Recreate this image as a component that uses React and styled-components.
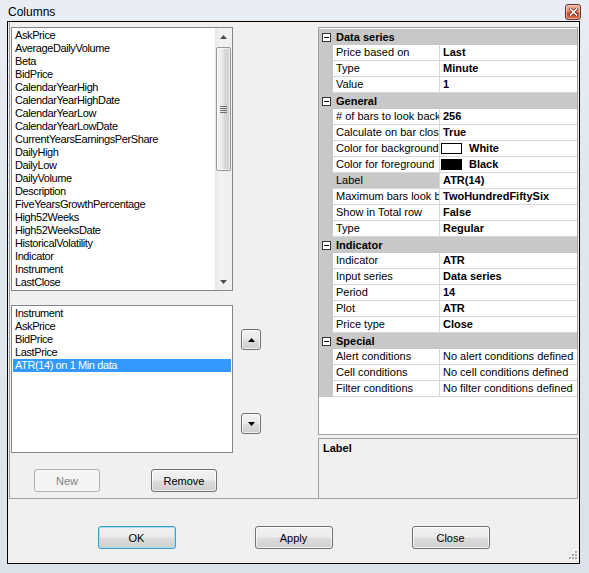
import React from 'react';
import styled, { createGlobalStyle, css } from 'styled-components';

const Global = createGlobalStyle`
  html, body { margin: 0; padding: 0; background: #dfe6ee; }
  body { font-family: "Liberation Sans", Arial, sans-serif; font-size: 11px; color: #000; }
  * { box-sizing: border-box; }
`;

const Window = styled.div`
  width: 589px;
  height: 573px;
  display: flex;
  flex-direction: column;
  padding: 0 9px 9px 7px;
  background: linear-gradient(180deg, #e9eef4 0%, #e1e7ee 30%, #dbe2ea 100%);
`;

const TitleBar = styled.div`
  height: 21px;
  flex: none;
  display: flex;
  align-items: flex-start;
  justify-content: space-between;
`;

const TitleText = styled.div`
  font-family: "Liberation Sans", Arial, sans-serif;
  font-size: 12px;
  line-height: 19px;
  padding: 3px 0 0 1px;
  color: #000;
`;

const CloseBtn = styled.div`
  width: 16px;
  height: 16px;
  margin: 4px -1px 0 0;
  border: 1px solid #6a3228;
  border-radius: 3px;
  background: linear-gradient(180deg, #eab4a2 0%, #df8d74 45%, #c94a2f 55%, #d46a4c 100%);
  box-shadow: inset 0 0 0 1px rgba(255, 230, 220, 0.55);
  display: flex;
  align-items: center;
  justify-content: center;
`;

const Client = styled.div`
  flex: 1;
  border: 1px solid #000;
  background: #f0f0f0;
  display: flex;
  flex-direction: column;
  position: relative;
`;

const Split = styled.div`
  height: 477px;
  flex: none;
  display: flex;
`;

const LeftPanel = styled.div`
  width: 309px;
  margin-left: 1px;
  border-left: 1px solid #a0a0a0;
  border-bottom: 1px solid #a0a0a0;
  padding: 5px 0 0 1px;
  display: flex;
  flex-direction: column;
`;

const ListBox = styled.div`
  width: 222px;
  height: ${p => p.$h}px;
  border: 1px solid #828790;
  background: #fff;
  display: flex;
  flex: none;
`;

const ListItems = styled.div`
  flex: 1;
  padding-top: 1px;
  overflow: hidden;
`;

const Item = styled.div`
  height: 13px;
  line-height: 13px;
  margin: 0 1px;
  padding-left: 2px;
  font-size: 11px;
  letter-spacing: -0.4px;
  white-space: nowrap;
  overflow: hidden;
  color: ${p => (p.$sel ? '#fff' : '#000')};
  background: ${p => (p.$sel ? '#3399ff' : 'transparent')};
`;

const ScrollBar = styled.div`
  width: 17px;
  flex: none;
  display: flex;
  flex-direction: column;
  background: linear-gradient(90deg, #e6e6e6 0%, #f2f2f2 30%, #f0f0f0 100%);
`;

const ScrollArrow = styled.div`
  height: 17px;
  flex: none;
  display: flex;
  align-items: center;
  justify-content: center;
`;

const Track = styled.div`
  flex: 1;
  padding: 2px 1px 0 1px;
`;

const Thumb = styled.div`
  height: 124px;
  border: 1px solid #979797;
  border-radius: 2px;
  background: linear-gradient(90deg, #f4f4f4 0%, #e8e8e8 45%, #d9d9d9 55%, #cfcfcf 100%);
  box-shadow: inset 0 0 0 1px rgba(255, 255, 255, 0.6);
  display: flex;
  align-items: center;
  justify-content: center;
`;

const MidRow = styled.div`
  display: flex;
  gap: 8px;
  margin-top: 14px;
`;

const ArrowCol = styled.div`
  display: flex;
  flex-direction: column;
  gap: 63px;
  padding-top: 24px;
`;

const ButtonRow = styled.div`
  display: flex;
  gap: 51px;
  padding-left: 23px;
  margin-top: 16px;
`;

const Button = styled.button`
  font-family: "Liberation Sans", Arial, sans-serif;
  font-size: ${p => p.$fs || 11}px;
  color: #000;
  width: ${p => p.$w}px;
  height: ${p => p.$h}px;
  padding: 0;
  border: 1px solid #707070;
  border-radius: 3px;
  background: linear-gradient(180deg, #f2f2f2 0%, #ebebeb 48%, #dddddd 52%, #cfcfcf 100%);
  box-shadow: inset 0 0 0 1px rgba(255, 255, 255, 0.7);
  display: flex;
  align-items: center;
  justify-content: center;
  ${p => p.$default && css`
    border-color: #3c9ad6;
    box-shadow: inset 0 0 0 1px #a9dcf6;
  `}
  ${p => p.disabled && css`
    border-color: #adb2b5;
    background: #f4f4f4;
    color: #838383;
    box-shadow: none;
  `}
`;

const RightPanel = styled.div`
  width: 261px;
  padding-top: 5px;
  display: flex;
  flex-direction: column;
  gap: 3px;
`;

const Grid = styled.div`
  width: 260px;
  height: 408px;
  border: 1px solid #a0a0a0;
  background: #fff;
  padding-top: 1px;
`;

const CatRow = styled.div`
  height: 16px;
  background: #c8c8c8;
  display: flex;
  align-items: center;
  padding-left: 3px;
`;

const CatText = styled.div`
  font-weight: bold;
  line-height: 15px;
  margin-left: 5px;
`;

const PropRow = styled.div`
  height: 16px;
  display: grid;
  grid-template-columns: 14px 107px 137px;
`;

const Margin = styled.div`
  background: #c8c8c8;
`;

const NameCell = styled.div`
  border-right: 1px solid #d8d8d8;
  border-bottom: 1px solid #d8d8d8;
  padding-left: 3px;
  line-height: 15px;
  white-space: nowrap;
  overflow: hidden;
  background: ${p => (p.$sel ? '#c8c8c8' : '#fff')};
`;

const ValueCell = styled.div`
  border-bottom: 1px solid #d8d8d8;
  padding-left: 3px;
  line-height: 15px;
  white-space: nowrap;
  overflow: hidden;
  font-weight: ${p => (p.$bold ? 'bold' : 'normal')};
  display: flex;
  align-items: center;
`;

const Swatch = styled.span`
  width: 21px;
  height: 11px;
  border: 1px solid #000;
  background: ${p => p.$c};
  margin: 0 7px 0 -2px;
  flex: none;
`;

const Desc = styled.div`
  width: 260px;
  height: 61px;
  border: 1px solid #a0a0a0;
  background: #f0f0f0;
  padding: 3px 0 0 4px;
  font-weight: bold;
  line-height: 13px;
`;

const BottomBar = styled.div`
  flex: 1;
  display: flex;
  justify-content: center;
  gap: 79px;
  padding-top: 27px;
`;

const Grip = styled.div`
  position: absolute;
  right: 1px;
  bottom: 1px;
  width: 11px;
  height: 11px;
`;

const UpTri = ({ c = '#000' }) => (
  <svg width="7" height="4" viewBox="0 0 7 4"><path d="M3.5 0L7 4H0Z" fill={c} /></svg>
);
const DownTri = ({ c = '#000' }) => (
  <svg width="7" height="4" viewBox="0 0 7 4"><path d="M0 0H7L3.5 4Z" fill={c} /></svg>
);

const Minus = () => (
  <svg width="9" height="9" viewBox="0 0 9 9">
    <rect x="0.5" y="0.5" width="8" height="8" fill="#fff" stroke="#333" />
    <path d="M2 4.5H7" stroke="#000" />
  </svg>
);

const topItems = [
  'AskPrice', 'AverageDailyVolume', 'Beta', 'BidPrice', 'CalendarYearHigh',
  'CalendarYearHighDate', 'CalendarYearLow', 'CalendarYearLowDate',
  'CurrentYearsEarningsPerShare', 'DailyHigh', 'DailyLow', 'DailyVolume',
  'Description', 'FiveYearsGrowthPercentage', 'High52Weeks', 'High52WeeksDate',
  'HistoricalVolatility', 'Indicator', 'Instrument', 'LastClose',
];

const bottomItems = ['Instrument', 'AskPrice', 'BidPrice', 'LastPrice', 'ATR(14) on 1 Min data'];

const grid = [
  { cat: 'Data series', rows: [
    ['Price based on', 'Last', true],
    ['Type', 'Minute', true],
    ['Value', '1', true],
  ] },
  { cat: 'General', rows: [
    ['# of bars to look back', '256', true],
    ['Calculate on bar close', 'True', true],
    ['Color for background', 'White', true, '#fff'],
    ['Color for foreground', 'Black', true, '#000'],
    ['Label', 'ATR(14)', true, null, true],
    ['Maximum bars look back', 'TwoHundredFiftySix', true],
    ['Show in Total row', 'False', true],
    ['Type', 'Regular', true],
  ] },
  { cat: 'Indicator', rows: [
    ['Indicator', 'ATR', true],
    ['Input series', 'Data series', true],
    ['Period', '14', true],
    ['Plot', 'ATR', true],
    ['Price type', 'Close', true],
  ] },
  { cat: 'Special', rows: [
    ['Alert conditions', 'No alert conditions defined', false],
    ['Cell conditions', 'No cell conditions defined', false],
    ['Filter conditions', 'No filter conditions defined', false],
  ] },
];

export default function App() {
  return (
    <>
      <Global />
      <Window>
        <TitleBar>
          <TitleText>Columns</TitleText>
          <CloseBtn>
            <svg width="9" height="8" viewBox="0 0 9 8">
              <path d="M1.5 1L7.5 7M7.5 1L1.5 7" stroke="#5a241a" strokeWidth="3" strokeLinecap="square" />
              <path d="M1.5 1L7.5 7M7.5 1L1.5 7" stroke="#fff" strokeWidth="1.6" strokeLinecap="square" />
            </svg>
          </CloseBtn>
        </TitleBar>
        <Client>
          <Split>
            <LeftPanel>
              <ListBox $h={264}>
                <ListItems>
                  {topItems.map(t => <Item key={t}>{t}</Item>)}
                </ListItems>
                <ScrollBar>
                  <ScrollArrow><UpTri c="#505050" /></ScrollArrow>
                  <Track>
                    <Thumb>
                      <svg width="7" height="7" viewBox="0 0 7 7">
                        <path d="M0 0.5H7M0 2.5H7M0 4.5H7M0 6.5H7" stroke="#6e6e6e" />
                      </svg>
                    </Thumb>
                  </Track>
                  <ScrollArrow><DownTri c="#505050" /></ScrollArrow>
                </ScrollBar>
              </ListBox>
              <MidRow>
                <ListBox $h={148}>
                  <ListItems>
                    {bottomItems.map((t, i) => <Item key={t} $sel={i === 4}>{t}</Item>)}
                  </ListItems>
                </ListBox>
                <ArrowCol>
                  <Button $w={20} $h={21}><UpTri /></Button>
                  <Button $w={20} $h={21}><DownTri /></Button>
                </ArrowCol>
              </MidRow>
              <ButtonRow>
                <Button $w={66} $h={23} disabled>New</Button>
                <Button $w={66} $h={23}>Remove</Button>
              </ButtonRow>
            </LeftPanel>
            <RightPanel>
              <Grid>
                {grid.map(g => (
                  <React.Fragment key={g.cat}>
                    <CatRow>
                      <Minus />
                      <CatText>{g.cat}</CatText>
                    </CatRow>
                    {g.rows.map(([n, v, b, sw, sel]) => (
                      <PropRow key={g.cat + n}>
                        <Margin />
                        <NameCell $sel={sel}>{n}</NameCell>
                        <ValueCell $bold={b}>
                          {sw && <Swatch $c={sw} />}
                          {v}
                        </ValueCell>
                      </PropRow>
                    ))}
                  </React.Fragment>
                ))}
              </Grid>
              <Desc>Label</Desc>
            </RightPanel>
          </Split>
          <BottomBar>
            <Button $w={78} $h={23} $default>OK</Button>
            <Button $w={78} $h={23}>Apply</Button>
            <Button $w={78} $h={23}>Close</Button>
          </BottomBar>
          <Grip>
            <svg width="11" height="11" viewBox="0 0 11 11">
              {[[8, 0], [8, 3], [5, 3], [8, 6], [5, 6], [2, 6]].map(([x, y]) => (
                <g key={x + '-' + y}>
                  <rect x={x + 1} y={y + 1} width="2" height="2" fill="#fff" />
                  <rect x={x} y={y} width="2" height="2" fill="#a8a8a8" />
                </g>
              ))}
            </svg>
          </Grip>
        </Client>
      </Window>
    </>
  );
}
